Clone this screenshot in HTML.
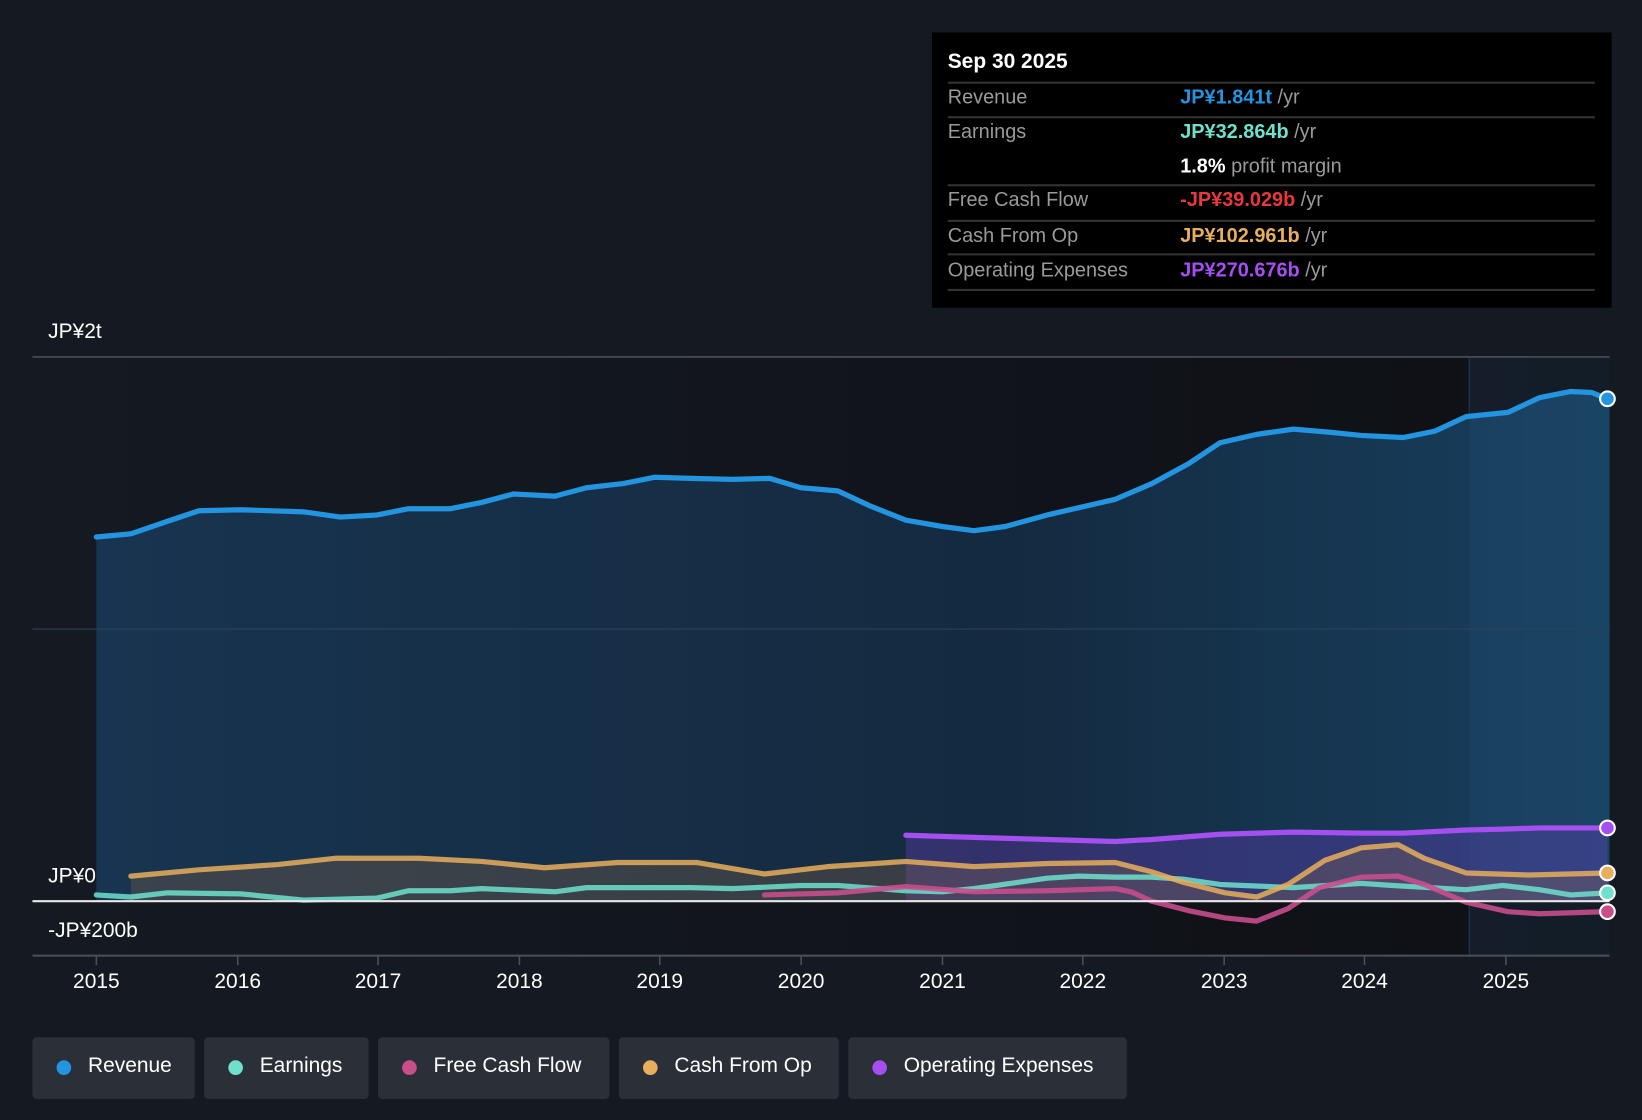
<!DOCTYPE html>
<html><head><meta charset="utf-8"><style>
html,body{margin:0;padding:0;background:#151a22;overflow:hidden}
#w{width:1568px;height:1070px;transform:scale(1.0472,1.0467);transform-origin:0 0;position:relative;font-family:"Liberation Sans",sans-serif;color:#fff}
.t{position:absolute;white-space:nowrap}
#tip{position:absolute;left:890px;top:31px;width:649px;height:263px;background:#000}
.ln{position:absolute;left:15px;width:618px;height:2px;background:#333}
.lb{position:absolute;left:15px;font-size:19px;color:#9a9a9a}
.vl{position:absolute;left:237px;font-size:19px;font-weight:bold}
.vl span{font-weight:normal;color:#9a9a9a}
.lg{position:absolute;top:991px;height:59px;background:#2a2f38;border-radius:4px;font-size:20px}
.lg i{position:absolute;left:23px;top:22px;width:14px;height:14px;border-radius:50%}
.lg b{position:absolute;left:53px;top:16px;font-weight:normal}
.yr{position:absolute;top:927px;font-size:20px;width:80px;text-align:center}
</style></head><body><div id="w">
<svg width="1568" height="1070" style="position:absolute;left:0;top:0">
<defs>
<linearGradient id="pg" x1="0" x2="1"><stop offset="0" stop-color="#151a22"/><stop offset="1" stop-color="#0e1015"/></linearGradient>
<linearGradient id="rg" x1="0" x2="1"><stop offset="0" stop-color="#183450"/><stop offset="0.6" stop-color="#142a40"/><stop offset="1" stop-color="#17405f"/></linearGradient>
</defs>
<rect x="31" y="341" width="1506" height="572" fill="url(#pg)"/>
<path d="M92,513 L125,510 L160,498 L190,488 L230,487 L290,489 L325,494 L360,492 L390,486 L430,486 L460,480 L490,472 L530,474 L560,466 L595,462 L625,456 L660,457 L700,458 L735,457 L765,466 L800,469 L830,483 L865,497 L900,503 L930,507 L960,503 L1000,492 L1065,477 L1100,462 L1135,443 L1165,423 L1200,415 L1235,410 L1270,413 L1300,416 L1340,418 L1370,412 L1400,398 L1440,394 L1470,380 L1500,374 L1520,375 L1535,381 L1537,381 L1537,861 L92,861Z" fill="url(#rg)"/>
<rect x="1403" y="341" width="134" height="572" fill="#2a5a80" opacity="0.18"/>
<line x1="1403" y1="341" x2="1403" y2="913" stroke="#1e3a55" stroke-width="1"/>
<line x1="31" y1="601" x2="1537" y2="601" stroke="#2c4258" stroke-width="1"/>
<line x1="31" y1="341" x2="1537" y2="341" stroke="#4a4f58" stroke-width="1.5"/>
<path d="M865,798 L930,800 L1000,802 L1065,804 L1100,802 L1165,797 L1235,795 L1300,796 L1340,796 L1400,793 L1440,792 L1470,791 L1535,791 L1535,861 L865,861Z" fill="#6a3fc0" opacity="0.35"/>
<path d="M125,837 L190,831 L265,826 L320,820 L400,820 L460,823 L520,829 L590,824 L665,824 L730,835 L790,828 L865,823 L930,828 L1000,825 L1065,824 L1100,833 L1130,843 L1170,853 L1200,857 L1230,845 L1265,822 L1300,810 L1335,807 L1360,820 L1400,834 L1460,836 L1535,834 L1535,861 L125,861Z" fill="#8a6a4a" opacity="0.3"/>
<g fill="none" stroke-width="5" stroke-linejoin="round" stroke-linecap="round">
<path d="M92,855 L125,857 L160,853 L230,854 L290,860 L360,858 L390,851 L430,851 L460,849 L530,852 L560,848 L660,848 L700,849 L765,846 L800,846 L865,851 L900,852 L930,849 L1000,839 L1030,837 L1065,838 L1100,838 L1130,840 L1165,845 L1235,848 L1300,844 L1330,846 L1400,850 L1435,846 L1470,850 L1500,855 L1535,853" stroke="#6fe0cc" opacity="0.85"/>
<path d="M730,855 L800,853 L865,847 L930,852 L1000,851 L1065,849 L1080,852 L1100,861 L1135,870 L1170,877 L1200,880 L1230,868 L1260,848 L1300,838 L1335,837 L1360,845 L1400,862 L1440,871 L1470,873 L1535,871" stroke="#c84e8c" opacity="0.9"/>
<path d="M125,837 L190,831 L265,826 L320,820 L400,820 L460,823 L520,829 L590,824 L665,824 L730,835 L790,828 L865,823 L930,828 L1000,825 L1065,824 L1100,833 L1130,843 L1170,853 L1200,857 L1230,845 L1265,822 L1300,810 L1335,807 L1360,820 L1400,834 L1460,836 L1535,834" stroke="#e8ae5c" opacity="0.85"/>
<path d="M865,798 L930,800 L1000,802 L1065,804 L1100,802 L1165,797 L1235,795 L1300,796 L1340,796 L1400,793 L1440,792 L1470,791 L1535,791" stroke="#a54ff0"/>
<path d="M92,513 L125,510 L160,498 L190,488 L230,487 L290,489 L325,494 L360,492 L390,486 L430,486 L460,480 L490,472 L530,474 L560,466 L595,462 L625,456 L660,457 L700,458 L735,457 L765,466 L800,469 L830,483 L865,497 L900,503 L930,507 L960,503 L1000,492 L1065,477 L1100,462 L1135,443 L1165,423 L1200,415 L1235,410 L1270,413 L1300,416 L1340,418 L1370,412 L1400,398 L1440,394 L1470,380 L1500,374 L1520,375 L1535,381" stroke="#2394e0"/>
</g>
<line x1="31" y1="861" x2="1537" y2="861" stroke="#e8e8e8" stroke-width="2"/>
<line x1="31" y1="913" x2="1537" y2="913" stroke="#4a4f58" stroke-width="2"/>
<g stroke="#4a4f58" stroke-width="1.5">
<line x1="92" y1="913" x2="92" y2="922"/><line x1="227" y1="913" x2="227" y2="922"/><line x1="361" y1="913" x2="361" y2="922"/><line x1="496" y1="913" x2="496" y2="922"/><line x1="630" y1="913" x2="630" y2="922"/><line x1="765" y1="913" x2="765" y2="922"/><line x1="900" y1="913" x2="900" y2="922"/><line x1="1034" y1="913" x2="1034" y2="922"/><line x1="1169" y1="913" x2="1169" y2="922"/><line x1="1303" y1="913" x2="1303" y2="922"/><line x1="1438" y1="913" x2="1438" y2="922"/>
</g>
<g stroke="#fff" stroke-width="2">
<circle cx="1535" cy="381" r="7" fill="#2394e0"/>
<circle cx="1535" cy="791" r="7" fill="#a54ff0"/>
<circle cx="1535" cy="834" r="7" fill="#e8ae5c"/>
<circle cx="1535" cy="853" r="7" fill="#6fe0cc"/>
<circle cx="1535" cy="871" r="7" fill="#c84e8c"/>
</g>
</svg>
<div class="t" style="left:46px;top:306px;font-size:20px">JP¥2t</div>
<div class="t" style="left:46px;top:826px;font-size:20px">JP¥0</div>
<div class="t" style="left:46px;top:878px;font-size:20px">-JP¥200b</div>
<div class="yr" style="left:52px">2015</div><div class="yr" style="left:187px">2016</div><div class="yr" style="left:321px">2017</div><div class="yr" style="left:456px">2018</div><div class="yr" style="left:590px">2019</div><div class="yr" style="left:725px">2020</div><div class="yr" style="left:860px">2021</div><div class="yr" style="left:994px">2022</div><div class="yr" style="left:1129px">2023</div><div class="yr" style="left:1263px">2024</div><div class="yr" style="left:1398px">2025</div>
<div id="tip">
<div class="t" style="left:15px;top:17px;font-size:20px;font-weight:bold">Sep 30 2025</div>
<div class="ln" style="top:47px"></div><div class="ln" style="top:80px"></div><div class="ln" style="top:145px"></div><div class="ln" style="top:179px"></div><div class="ln" style="top:211px"></div><div class="ln" style="top:245px"></div>
<div class="lb" style="top:52px">Revenue</div><div class="vl" style="top:52px;color:#2394e0">JP¥1.841t <span>/yr</span></div>
<div class="lb" style="top:85px">Earnings</div><div class="vl" style="top:85px;color:#6fe0cc">JP¥32.864b <span>/yr</span></div>
<div class="vl" style="top:118px;color:#fff">1.8% <span>profit margin</span></div>
<div class="lb" style="top:150px">Free Cash Flow</div><div class="vl" style="top:150px;color:#e8383d">-JP¥39.029b <span>/yr</span></div>
<div class="lb" style="top:184px">Cash From Op</div><div class="vl" style="top:184px;color:#e8ae5c">JP¥102.961b <span>/yr</span></div>
<div class="lb" style="top:217px">Operating Expenses</div><div class="vl" style="top:217px;color:#a54ff0">JP¥270.676b <span>/yr</span></div>
</div>
<div class="lg" style="left:31px;width:155px"><i style="background:#2394e0"></i><b>Revenue</b></div>
<div class="lg" style="left:195px;width:157px"><i style="background:#6fe0cc"></i><b>Earnings</b></div>
<div class="lg" style="left:361px;width:221px"><i style="background:#c84e8c"></i><b>Free Cash Flow</b></div>
<div class="lg" style="left:591px;width:210px"><i style="background:#e8ae5c"></i><b>Cash From Op</b></div>
<div class="lg" style="left:810px;width:266px"><i style="background:#a54ff0"></i><b>Operating Expenses</b></div>
</div></body></html>
